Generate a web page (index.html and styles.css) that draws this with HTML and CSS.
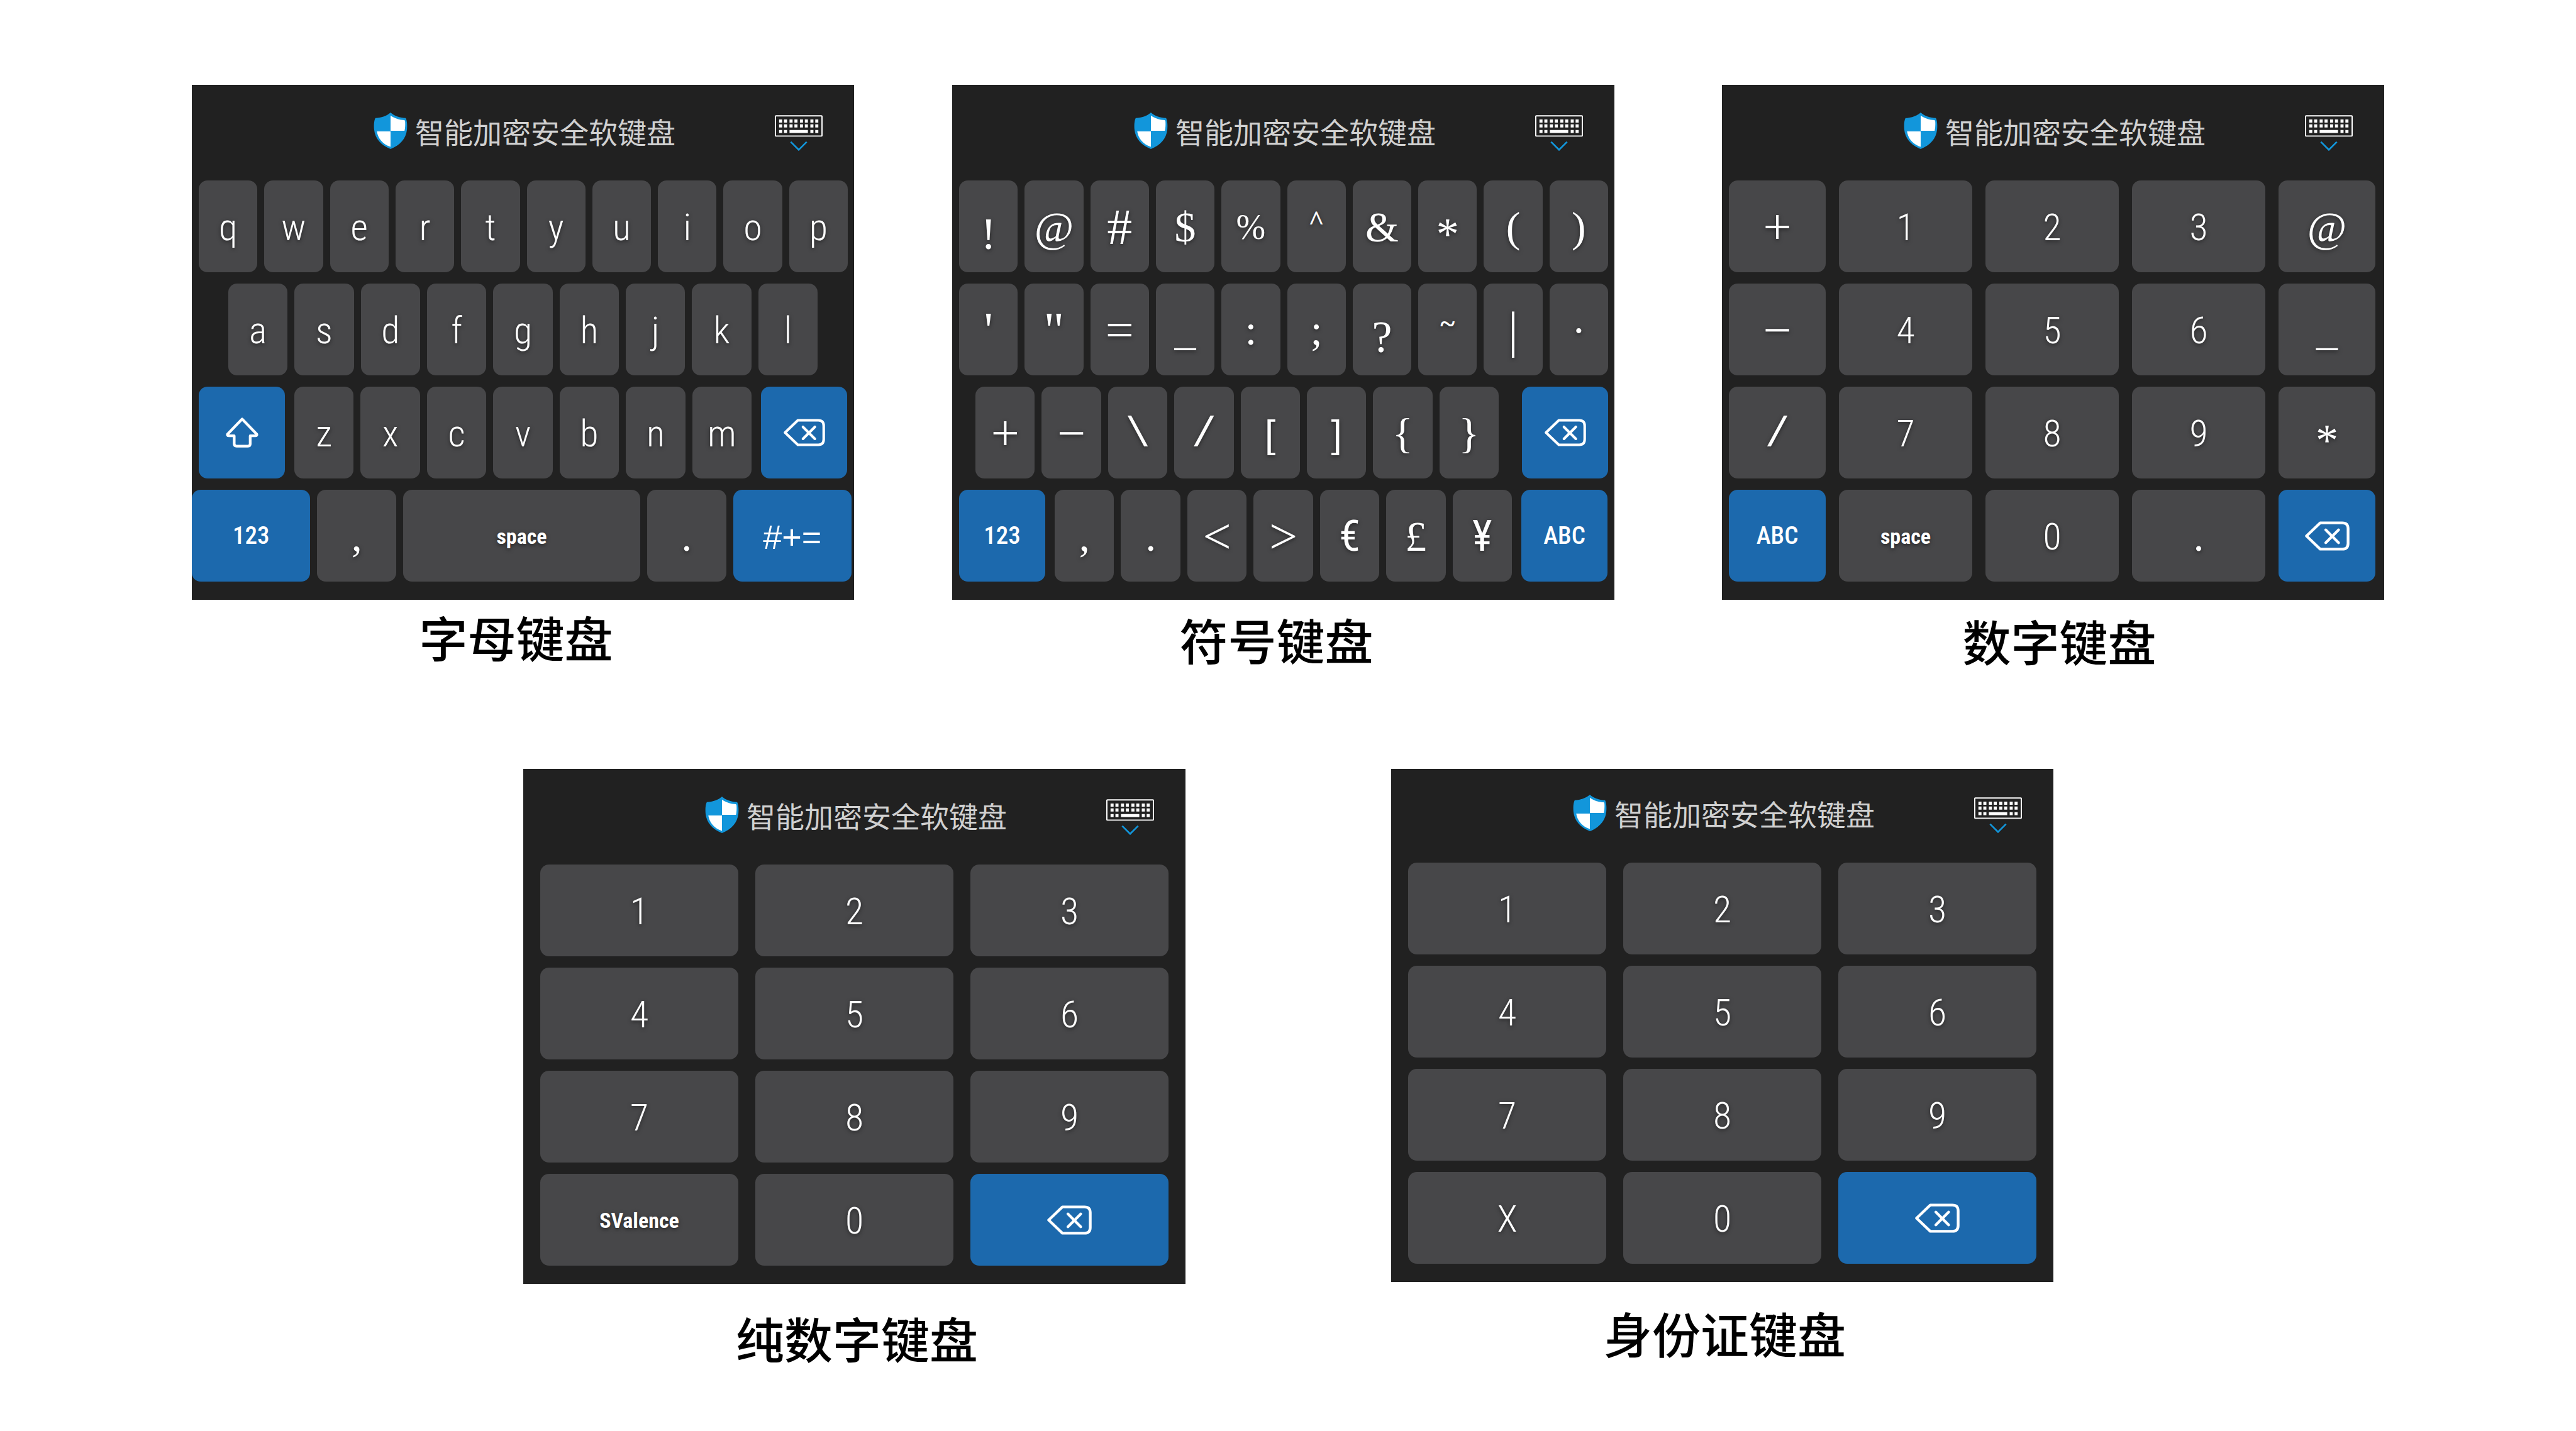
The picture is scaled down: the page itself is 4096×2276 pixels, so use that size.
FILE: index.html
```html
<!DOCTYPE html>
<html lang="zh-CN">
<head>
<meta charset="utf-8">
<meta name="viewport" content="width=device-width, initial-scale=1">
<title>智能加密安全软键盘</title>
<link rel="stylesheet" href="styles.css">
</head>
<body>
<svg class="sprite" aria-hidden="true">
  <symbol id="shield" viewBox="0 0 55 60">
    <path fill="#1296db" d="M27.5 0C22 5 12 9 2.5 9 0 14 0 22 .5 28 2 43 12 54 27.5 60 43 54 53 43 54.5 28 55 22 55 14 52.5 9 43 9 33 5 27.5 0Z"/>
    <path fill="#fff" d="M27.5 5C33 9 42 12.5 50 12.5Q51.500 13 51.500 15 52 24 50.500 30H27.5ZM27.500 31H5C7 43 14 51.500 27.500 56.500Z"/>
  </symbol>
  <symbol id="hide" viewBox="0 0 78 58">
    <rect x="1" y="1" width="76" height="33" rx="1" fill="none" stroke="#fff" stroke-width="2"/>
    <path fill="#fff" d="M7 7h5v5H7zM15 7h5v5h-5zM24 7h5v5h-5zM32 7h5v5h-5zM41 7h5v5h-5zM49 7h5v5h-5zM58 7h5v5h-5zM66 7h5v5h-5zM7 15h5v5H7zM15 15h5v5h-5zM24 15h5v5h-5zM32 15h5v5h-5zM41 15h5v5h-5zM49 15h5v5h-5zM58 15h5v5h-5zM66 15h5v5h-5zM7 24h5v5H7zM15 24h5v5h-5zM24 24h30v5H24zM58 24h5v5h-5zM66 24h5v5h-5z"/>
    <path fill="none" stroke="#1296db" stroke-width="2.700" d="M26 43.500 39 56.500 52 43.500"/>
  </symbol>
  <symbol id="backspace" viewBox="0 0 73 48">
    <path fill="none" stroke="#fff" stroke-width="4.500" stroke-linejoin="round" d="M25 2.500H61Q70.500 2.500 70.500 12V36Q70.500 45.500 61 45.500H25L2.500 24Z"/>
    <path fill="none" stroke="#fff" stroke-width="4.500" stroke-linecap="round" d="M34 14 55 35M55 14 34 35"/>
  </symbol>
  <symbol id="shift" viewBox="0 0 53 49">
    <path fill="none" stroke="#fff" stroke-width="4.400" stroke-linejoin="round" d="M26.500 2.500 2.800 27Q2 29.800 5 29.800H13.600V43Q13.600 46.500 17.500 46.500H36Q39.600 46.500 39.600 43V29.800H48Q51 29.800 50.200 27Z"/>
  </symbol>
</svg>

<main class="page">
  <div class="shelf shelf--three">
    <figure class="board board--letters">
      <div class="panel">
        <header class="bar">
          <div class="brand"><svg class="brand__shield" aria-hidden="true"><use href="#shield"/></svg><span>智能加密安全软键盘</span></div>
          <button class="hide" type="button" aria-label="收起键盘"><svg class="hide__icon" aria-hidden="true"><use href="#hide"/></svg></button>
        </header>
        <div class="keys">
          <div class="row">
            <button class="key">q</button><button class="key">w</button><button class="key">e</button><button class="key">r</button><button class="key">t</button><button class="key">y</button><button class="key">u</button><button class="key">i</button><button class="key">o</button><button class="key">p</button>
          </div>
          <div class="row row--inset">
            <button class="key">a</button><button class="key">s</button><button class="key">d</button><button class="key">f</button><button class="key">g</button><button class="key">h</button><button class="key">j</button><button class="key">k</button><button class="key">l</button>
          </div>
          <div class="row row--edges">
            <button class="key key--blue" aria-label="大写"><svg class="icon-shift" aria-hidden="true"><use href="#shift"/></svg></button>
            <div class="group">
              <button class="key">z</button><button class="key">x</button><button class="key">c</button><button class="key">v</button><button class="key">b</button><button class="key">n</button><button class="key">m</button>
            </div>
            <button class="key key--blue" aria-label="删除"><svg class="icon-del icon-del--small" aria-hidden="true"><use href="#backspace"/></svg></button>
          </div>
          <div class="row row--space">
            <button class="key key--blue key--mode">123</button><button class="key key--sym">,</button><button class="key key--word">space</button><button class="key key--sym">.</button><button class="key key--blue key--signs">#+=</button>
          </div>
        </div>
      </div>
      <figcaption class="caption">字母键盘</figcaption>
    </figure>

    <figure class="board board--symbols">
      <div class="panel">
        <header class="bar">
          <div class="brand"><svg class="brand__shield" aria-hidden="true"><use href="#shield"/></svg><span>智能加密安全软键盘</span></div>
          <button class="hide" type="button" aria-label="收起键盘"><svg class="hide__icon" aria-hidden="true"><use href="#hide"/></svg></button>
        </header>
        <div class="keys">
          <div class="row">
            <button class="key key--sym key--low">!</button><button class="key key--sym">@</button><button class="key key--math">#</button><button class="key key--sym">$</button><button class="key key--sym key--narrow">%</button><button class="key key--sym key--accent">^</button><button class="key key--sym">&amp;</button><button class="key key--sym key--low">*</button><button class="key key--sym">(</button><button class="key key--sym">)</button>
          </div>
          <div class="row">
            <button class="key key--math">'</button><button class="key key--math">"</button><button class="key key--math">=</button><button class="key key--sym">_</button><button class="key key--sym">:</button><button class="key key--sym">;</button><button class="key key--sym key--low">?</button><button class="key key--sym key--accent">~</button><button class="key key--math">|</button><button class="key key--sym">·</button>
          </div>
          <div class="row row--ops">
            <div class="group">
              <button class="key key--math">+</button><button class="key key--math">−</button><button class="key key--slash">\</button><button class="key key--slash">/</button><button class="key key--bracket">[</button><button class="key key--bracket">]</button><button class="key key--sym">{</button><button class="key key--sym">}</button>
            </div>
            <button class="key key--blue" aria-label="删除"><svg class="icon-del icon-del--small" aria-hidden="true"><use href="#backspace"/></svg></button>
          </div>
          <div class="row row--edges">
            <button class="key key--blue key--mode">123</button>
            <div class="group">
              <button class="key key--sym">,</button><button class="key key--sym">.</button><button class="key key--math">&lt;</button><button class="key key--math">&gt;</button><button class="key key--money">€</button><button class="key key--sym">£</button><button class="key key--money">¥</button>
            </div>
            <button class="key key--blue key--mode">ABC</button>
          </div>
        </div>
      </div>
      <figcaption class="caption">符号键盘</figcaption>
    </figure>

    <figure class="board board--numbers">
      <div class="panel">
        <header class="bar">
          <div class="brand"><svg class="brand__shield" aria-hidden="true"><use href="#shield"/></svg><span>智能加密安全软键盘</span></div>
          <button class="hide" type="button" aria-label="收起键盘"><svg class="hide__icon" aria-hidden="true"><use href="#hide"/></svg></button>
        </header>
        <div class="keys keys--five">
          <button class="key key--math">+</button><button class="key">1</button><button class="key">2</button><button class="key">3</button><button class="key key--sym">@</button>
          <button class="key key--math">−</button><button class="key">4</button><button class="key">5</button><button class="key">6</button><button class="key key--sym">_</button>
          <button class="key key--slash">/</button><button class="key">7</button><button class="key">8</button><button class="key">9</button><button class="key key--sym key--low">*</button>
          <button class="key key--blue key--mode">ABC</button><button class="key key--word">space</button><button class="key">0</button><button class="key key--sym">.</button><button class="key key--blue" aria-label="删除"><svg class="icon-del" aria-hidden="true"><use href="#backspace"/></svg></button>
        </div>
      </div>
      <figcaption class="caption">数字键盘</figcaption>
    </figure>
  </div>

  <div class="shelf shelf--two">
    <figure class="board board--digits">
      <div class="panel">
        <header class="bar">
          <div class="brand"><svg class="brand__shield" aria-hidden="true"><use href="#shield"/></svg><span>智能加密安全软键盘</span></div>
          <button class="hide" type="button" aria-label="收起键盘"><svg class="hide__icon" aria-hidden="true"><use href="#hide"/></svg></button>
        </header>
        <div class="keys keys--three">
          <button class="key">1</button><button class="key">2</button><button class="key">3</button>
          <button class="key">4</button><button class="key">5</button><button class="key">6</button>
          <button class="key">7</button><button class="key">8</button><button class="key">9</button>
          <button class="key key--word">SValence</button><button class="key">0</button><button class="key key--blue" aria-label="删除"><svg class="icon-del" aria-hidden="true"><use href="#backspace"/></svg></button>
        </div>
      </div>
      <figcaption class="caption">纯数字键盘</figcaption>
    </figure>

    <figure class="board board--id">
      <div class="panel">
        <header class="bar bar--short">
          <div class="brand"><svg class="brand__shield" aria-hidden="true"><use href="#shield"/></svg><span>智能加密安全软键盘</span></div>
          <button class="hide" type="button" aria-label="收起键盘"><svg class="hide__icon" aria-hidden="true"><use href="#hide"/></svg></button>
        </header>
        <div class="keys keys--three">
          <button class="key">1</button><button class="key">2</button><button class="key">3</button>
          <button class="key">4</button><button class="key">5</button><button class="key">6</button>
          <button class="key">7</button><button class="key">8</button><button class="key">9</button>
          <button class="key">X</button><button class="key">0</button><button class="key key--blue" aria-label="删除"><svg class="icon-del" aria-hidden="true"><use href="#backspace"/></svg></button>
        </div>
      </div>
      <figcaption class="caption">身份证键盘</figcaption>
    </figure>
  </div>
</main>
</body>
</html>
```

FILE: styles.css
```css
* { box-sizing: border-box; }

body {
  margin: 0;
  background: #fff;
  color: #000;
  font-family: "Noto Sans CJK SC", sans-serif;
}

.sprite { position: absolute; width: 0; height: 0; }

.page {
  display: flex;
  flex-direction: column;
  gap: 165px;
  padding: 135px 0 109px;
}

/* Shelves share the window's width in proportion: margins, boards, gutters */
.shelf { display: grid; align-items: start; }
.shelf--three {
  grid-template-columns:
    minmax(0, 305fr) minmax(0, 1053fr) minmax(0, 156fr) minmax(0, 1053fr)
    minmax(0, 171fr) minmax(0, 1053fr) minmax(0, 305fr);
}
.shelf--two {
  grid-template-columns:
    minmax(0, 832fr) minmax(0, 1053fr) minmax(0, 327fr) minmax(0, 1053fr)
    minmax(0, 831fr);
}

.board { margin: 0; display: flex; flex-direction: column; }
.board--letters, .board--digits { grid-column: 2; }
.board--symbols, .board--id { grid-column: 4; }
.board--numbers { grid-column: 6; }

.board--letters { gap: 20px; }
.board--symbols { gap: 24px; }
.board--numbers { gap: 26px; }
.board--digits { gap: 47px; }
.board--id { gap: 42px; }

.caption {
  font-size: 77px;
  font-weight: 500;
  line-height: 78px;
  text-align: center;
}
.board--letters .caption, .board--symbols .caption { padding-right: 22px; }
.board--numbers .caption { padding-left: 20px; }
.board--digits .caption, .board--id .caption { padding-left: 8px; }

.panel { background: #212121; padding-bottom: 29px; }

/* Title bar */
.bar {
  display: grid;
  grid-template-columns: 1fr auto 1fr;
  align-items: start;
  height: 152px;
  padding: 44px 50px 0 55px;
}
.bar--short { height: 149px; padding-top: 41px; }
.brand {
  grid-column: 2;
  display: flex;
  gap: 12px;
  color: #d0d0d0;
  font-size: 46px;
  line-height: 58px;
  white-space: nowrap;
}
.brand__shield { width: 54px; height: 58px; }
.hide {
  justify-self: end;
  padding: 4px 0 0;
  border: 0;
  background: none;
}
.hide__icon { display: block; width: 76px; height: 57px; }

/* Keys */
.keys { display: grid; gap: 18px; }
.row { display: grid; grid-auto-flow: column; grid-auto-columns: minmax(0, 1fr); gap: 11px; padding: 0 10px 0 11px; }
.row--inset { padding: 0 58px; }
.row--edges { grid-template-columns: 137px minmax(0, 1fr) 137px; gap: 15px; padding: 0 11px; }
.row--ops { grid-template-columns: minmax(0, 1fr) 137px; gap: 37px; padding: 0 10px 0 37px; }
.row--space { grid-template-columns: 3fr 2fr 6fr 2fr 3fr; padding: 0 4px 0 0; }
.group { display: grid; grid-auto-flow: column; grid-auto-columns: minmax(0, 1fr); gap: 11px; }
.keys--five {
  grid-template-columns: 154px repeat(3, minmax(0, 1fr)) 154px;
  column-gap: 21px;
  padding: 0 14px 0 11px;
}
.keys--three {
  grid-template-columns: repeat(3, minmax(0, 1fr));
  column-gap: 27px;
  padding: 0 27px;
}

.key {
  display: flex;
  align-items: center;
  justify-content: center;
  height: 146px;
  padding: 2px 0 0;
  border: 0;
  border-radius: 14px;
  background: #474749;
  color: #fff;
  font-family: "Roboto Condensed", "Noto Sans CJK SC", sans-serif;
  font-size: 60px;
  font-weight: 300;
  text-shadow: 0 2px 6px rgba(0, 0, 0, 0.5);
}
.key--blue { padding: 0; background: #1c69ad; text-shadow: none; }
.key--mode { font-size: 39px; font-weight: 500; }
.key--word { font-size: 34px; font-weight: 700; }
.key--signs { padding-top: 4px; font-family: "Liberation Sans", sans-serif; font-size: 54px; }
.key--sym { font-family: "Liberation Serif", serif; font-size: 68px; }
.key--math { font-family: "Liberation Serif", serif; font-size: 80px; }
.key--low { padding-top: 24px; font-size: 72px; }
.key--narrow { font-size: 56px; }
.key--accent { align-items: flex-start; padding-top: 38px; font-size: 44px; font-weight: 700; }
.key--slash { padding-top: 6px; font-family: "Liberation Mono", monospace; font-size: 66px; }
.key--bracket { font-family: "Liberation Sans", sans-serif; font-size: 62px; }
.key--money { font-size: 68px; font-weight: 400; }

.icon-del { width: 71px; height: 47px; }
.icon-del--small { width: 66px; height: 44px; }
.icon-shift { width: 52px; height: 48px; }
```
